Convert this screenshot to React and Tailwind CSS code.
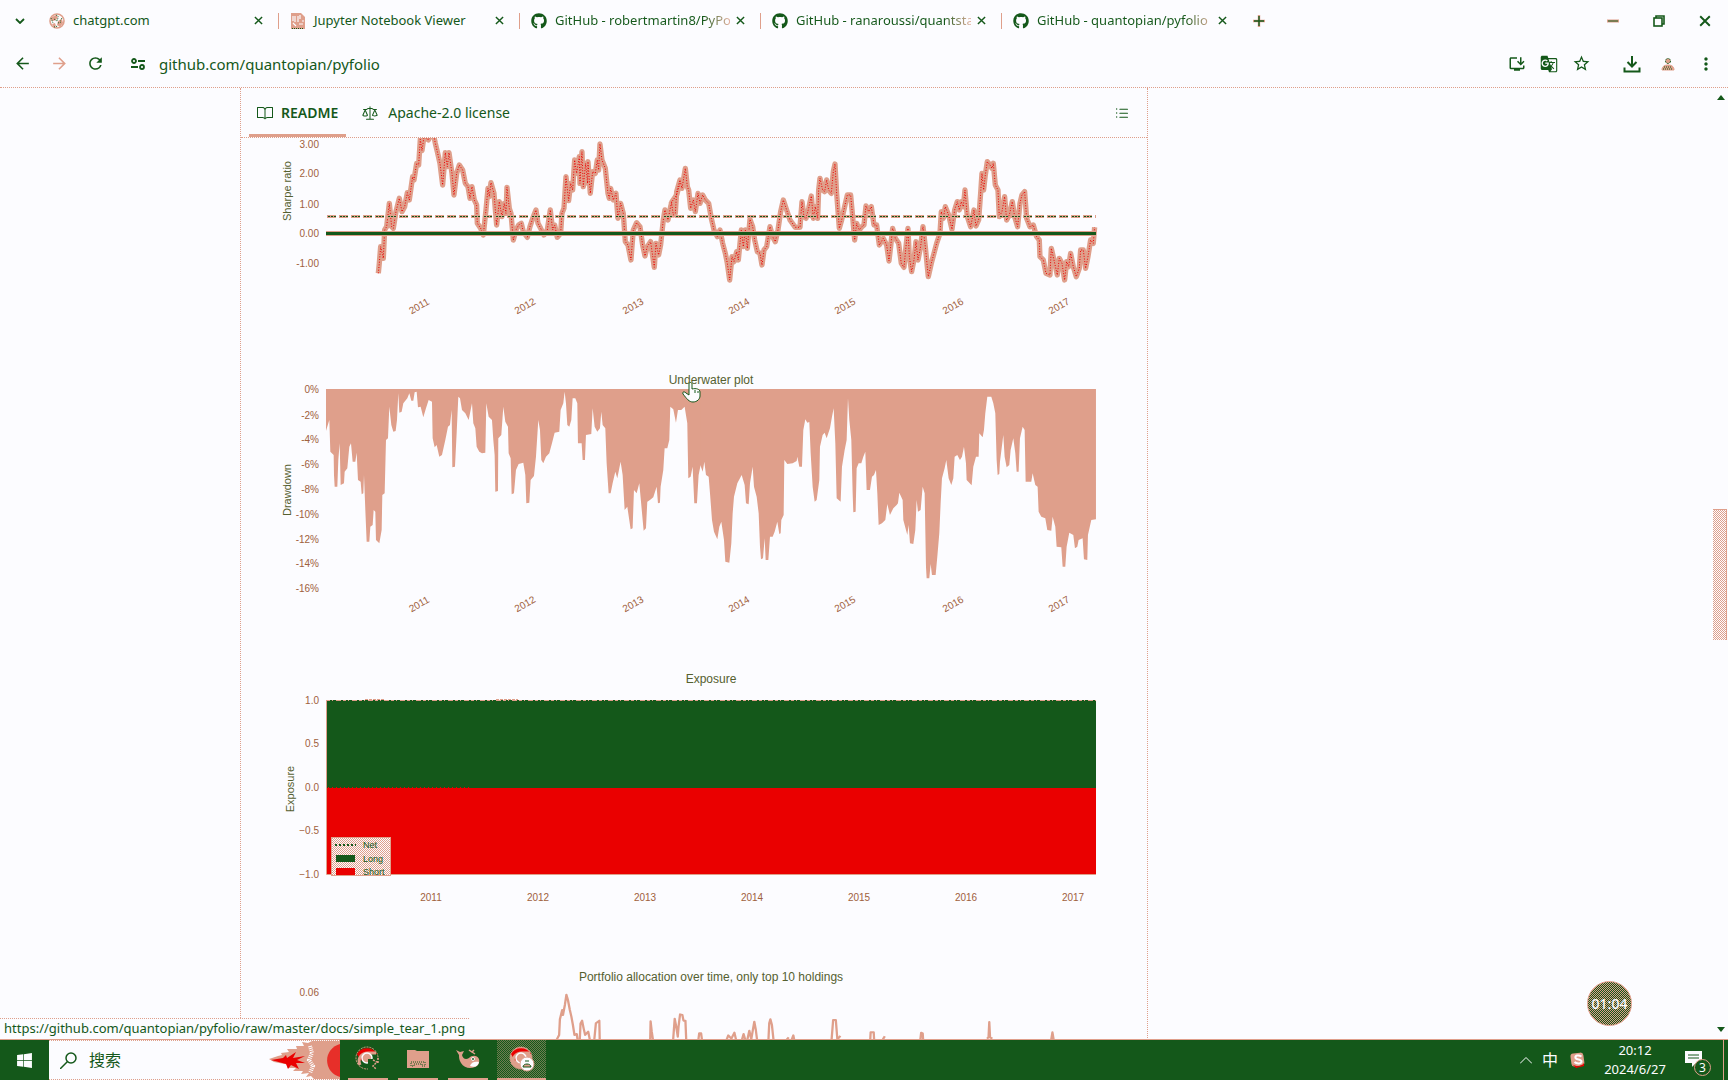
import React from "react";
import { FaGithub, FaWindows } from "react-icons/fa";
import { GoBook, GoLaw, GoListUnordered } from "react-icons/go";
import {
  MdArrowBack,
  MdArrowForward,
  MdRefresh,
  MdInstallDesktop,
  MdGTranslate,
  MdStarBorder,
  MdMoreVert,
} from "react-icons/md";

const INK = "#14581a";
const SALMON = "#df9f8b";
const RED = "#ea0000";
const PAPER = "#fcfcff";
const TICK = "#a0603c";
const TITLE = "#55602f";

const YEARS = ["2011", "2012", "2013", "2014", "2015", "2016", "2017"];

const SHARPE_A =
  "415,430 418,400 422,350 430,385 434,300 440,290 448,220 455,290 460,295 468,245 478,205 486,245 494,230 502,188 508,210 518,140 522,150 530,100 536,105 541,28 546,62 552,20 565,30 572,15 580,10 586,40 592,65 600,100 608,165 616,68 622,110 627,68 636,130 642,195 650,130 658,105 668,120 676,160 684,170 690,205 696,170 703,210 710,225 712,280 722,295 730,315 738,240 744,175 748,200 753,158 762,190 770,285 778,215 786,260 793,220 798,250 801,172 808,235 813,250 820,330 828,300 836,285 844,280 850,305 862,322 870,290 880,260 888,240 894,280 902,295 912,315 922,300 931,240 938,300 944,285 952,322 962,310 966,250 972,235 978,140 986,212 992,160 998,180 1004,90 1010,130 1018,80 1020,160 1026,65 1030,170 1037,100 1043,160 1044,95 1051,190 1058,125 1066,130 1072,90 1076,120 1080,42 1086,90 1096,115 1104,190 1108,205 1112,175 1120,210 1128,190 1134,265 1142,220 1150,250 1156,335 1164,345 1173,390 1180,300 1190,278 1200,290 1208,345 1215,378 1222,350 1232,335 1243,412 1248,340 1256,375 1262,345 1270,270 1275,240 1284,270 1292,230 1296,215 1310,195 1320,160";
const SHARPE_B =
  "4,215 10,255 16,250 20,185 30,150 36,175 46,115 52,170 56,180 62,235 70,210 76,245 84,190 90,220 98,195 106,210 116,220 124,265 132,300 142,320 150,300 158,340 166,370 172,400 179,450 186,380 192,395 200,365 205,390 214,300 220,350 226,300 232,355 240,268 248,290 254,330 262,365 270,370 276,405 282,360 290,350 300,290 308,320 316,335 324,300 332,245 340,210 350,240 360,270 376,292 390,292 396,215 402,260 408,265 416,235 424,198 430,265 436,230 443,265 446,180 450,145 458,180 464,185 470,150 476,180 484,190 490,125 495,102 500,190 508,295 515,270 524,230 532,195 542,195 548,260 554,330 560,280 568,300 576,290 582,285 588,228 596,245 604,230 612,285 620,285 628,345 640,325 650,345 657,393 662,350 668,295 676,325 686,340 694,400 702,412 708,350 714,295 718,380 725,425 732,390 738,335 744,390 752,350 759,290 766,350 775,440 784,400 792,370 800,340 810,310 814,245 820,265 826,230 836,255 846,298 854,240 862,215 868,240 874,215 880,230 885,180 892,260 902,290 912,240 918,288 926,270 932,190 936,130 941,180 946,135 952,95 960,105 966,115 970,100 976,165 984,180 988,260 996,245 1004,200 1010,270 1018,255 1027,215 1034,260 1043,290 1050,220 1056,195 1064,185 1070,265 1080,290 1090,285 1100,320 1108,330 1110,380 1120,390 1128,430 1140,435 1144,355 1152,390 1162,435 1168,385 1176,400 1184,450 1190,395 1196,410 1202,370 1210,410 1219,440 1228,415 1232,360 1240,360 1247,415 1254,380 1262,330 1270,340 1274,292";

const DRAWDOWN_A =
  "168,87 168,213 178,180 181,275 191,285 192,345 194,380 202,380 205,300 209,250 212,375 222,370 224,335 232,325 238,260 243,250 248,305 256,305 260,278 264,360 272,365 275,403 280,400 282,345 286,450 290,545 298,545 301,500 308,495 311,450 316,455 318,540 328,550 335,510 337,405 344,400 348,240 354,235 358,140 364,195 370,215 377,213 381,180 385,100 388,158 395,155 400,130 412,115 418,100 424,122 430,122 434,97 440,95 444,142 452,140 460,172 468,145 476,120 486,125 488,235 494,262 500,255 508,290 516,285 526,240 534,200 540,195 545,150 547,322 555,320 560,220 565,110 570,115 576,150 586,160 596,180 602,150 606,130 610,190 616,205 620,260 628,275 636,280 646,278 649,130 656,170 666,180 670,240 674,285 676,395 684,393 685,235 694,225 700,140 706,185 714,200 716,280 722,295 725,403 732,400 738,330 746,312 760,308 766,345 769,430 778,428 782,360 792,348 798,290 805,180 810,210 814,300 820,310 828,290 838,280 846,250 854,218 868,215 872,150 880,130 884,95 888,130 892,195 898,200 904,180 908,115 916,115 922,130 924,250 935,250 938,300 945,300 948,225 964,222 968,145 974,200 982,215 990,205 994,155 998,195 1006,205 1010,310 1016,400 1022,400 1028,370 1036,335 1042,355 1048,325 1052,305 1058,345 1064,450 1072,440 1082,508 1088,505 1092,390 1100,400 1108,370 1114,435 1121,512 1128,505 1132,425 1140,420 1150,412 1160,380 1164,430 1170,428 1172,380 1180,330 1184,265 1192,265 1198,240 1201,140 1210,148 1218,188 1224,150 1234,150 1244,140 1252,190 1255,355 1262,350 1268,320 1273,430 1281,430 1286,345 1292,315 1297,325 1297,87";
const DRAWDOWN_B =
  "91,87 91,315 98,335 103,305 108,345 116,350 120,400 126,480 132,515 142,538 148,500 154,485 162,540 166,605 178,608 184,550 188,460 192,410 202,370 215,345 224,375 228,430 236,433 240,370 248,320 252,380 260,410 266,460 270,560 273,598 279,595 284,535 287,600 295,600 300,530 308,530 314,515 322,485 328,522 332,520 334,480 341,465 343,300 352,312 368,310 380,303 382,290 388,320 396,320 400,210 406,178 412,188 418,186 422,280 428,380 434,425 440,420 448,360 450,260 458,225 464,218 470,235 480,205 486,170 491,145 496,250 500,415 512,425 516,320 524,270 530,240 534,115 538,180 544,240 548,400 550,457 557,455 560,325 566,310 574,310 580,290 586,275 590,390 600,390 606,350 612,345 618,330 622,400 626,495 636,490 646,480 652,432 660,465 670,445 680,435 684,430 688,398 698,420 700,480 712,525 716,495 720,550 730,552 736,510 740,420 744,455 752,450 758,380 764,400 768,620 770,655 778,655 782,612 786,645 797,645 802,590 808,520 812,430 816,355 824,325 829,300 836,355 844,375 850,355 854,290 862,285 870,300 876,290 882,260 888,310 890,360 905,376 910,320 918,290 926,290 928,220 938,232 942,210 946,160 952,110 964,110 970,130 976,160 980,300 983,345 988,342 990,305 1000,225 1004,290 1010,322 1018,315 1022,270 1030,235 1036,280 1040,335 1046,335 1050,235 1058,200 1064,210 1067,365 1084,365 1088,340 1096,375 1103,380 1106,455 1114,470 1126,475 1132,510 1144,512 1148,470 1156,500 1160,560 1174,562 1178,620 1186,620 1190,560 1198,518 1210,525 1215,565 1222,560 1226,540 1238,535 1242,598 1252,600 1254,525 1264,480 1278,478 1278,87";

const ALLOCATION =
  "M44,238L50,225L52,178L58,150L60,165L65,135L69,104L73,120L78,150L82,170L86,195L90,225L96,222L98,238 M104,238L106,190L110,182L114,205L118,225L126,215L130,238 M142,238L146,190L155,182L156,238 M288,238L289,184L292,215L295,238 M348,238L352,176L356,200L360,230L362,200L366,163L372,165L375,182L380,182L382,238 M414,238L416,220L421,220L423,238 M488,238L492,226L500,236L508,218L512,238 M528,238L532,222L536,238 M542,238L547,212L552,238L560,185L564,210L567,238 M597,238L599,190L602,178L606,195L610,238 M645,238L650,232 M658,238L662,226L664,238 M762,238L766,180L773,180L777,238L785,228 M863,238L864,217L872,217L873,238 M896,238L901,229 M994,238L996,218L1000,220L1001,238 M1168,236L1172,232L1174,186L1176,232L1182,236 M1336,238L1339,217L1342,238";

const tabs = [
  { title: "chatgpt.com", icon: "globe" },
  { title: "Jupyter Notebook Viewer", icon: "notebook" },
  { title: "GitHub - robertmartin8/PyPo", icon: "github" },
  { title: "GitHub - ranaroussi/quantsta", icon: "github" },
  { title: "GitHub - quantopian/pyfolio", icon: "github" },
];

function Globe() {
  return (
    <svg viewBox="0 0 16 16" className="size-4 shrink-0" aria-hidden="true">
      <circle cx="8" cy="8" r="7" fill={PAPER} stroke={SALMON} strokeWidth="1.6" />
      <path d="M3 4l4-2 2 2-2 3-3 1-2-1zM9 8l4-2 1 4-3 4-3-2zM3 11l3-1 1 3-2 1z" fill={SALMON} />
      <path d="M5 6l3 2 1-3M9 10l3-1M7 2l3 2M2 5l2 5M13 5l-2 3M5 14l4-1" stroke={INK} fill="none" strokeDasharray="1 1" />
    </svg>
  );
}

function Notebook() {
  return (
    <svg viewBox="0 0 16 16" className="size-4 shrink-0" aria-hidden="true">
      <path d="M1 0h10l4 4v12H1z" fill={SALMON} />
      <path d="M3 8V3M5 9V3M8 9V3M10 6V2M3 10l3 3M9 11h4M12 8h2" stroke={PAPER} strokeWidth="1.2" />
      <path d="M2 15.5h12" stroke={INK} strokeDasharray="1 1" />
    </svg>
  );
}

function Cross({ className }) {
  return (
    <svg viewBox="0 0 10 10" className={className} aria-hidden="true">
      <path d="M1 1l8 8M9 1l-8 8" stroke={INK} strokeWidth="1.6" fill="none" />
    </svg>
  );
}

function Tab({ tab, last, active }) {
  return (
    <div className="flex h-full min-w-0 max-w-[241px] flex-1 items-center pl-[9px]">
      {tab.icon === "globe" && <Globe />}
      {tab.icon === "notebook" && <Notebook />}
      {tab.icon === "github" && <FaGithub className="size-4 shrink-0" />}
      <button
        type="button"
        role="tab"
        aria-selected={active}
        className={
          tab.icon === "github"
            ? "ml-2 min-w-0 flex-1 bg-linear-to-r from-[#14581a] from-85% to-[#e6b3a3] bg-clip-text text-left text-[13px] whitespace-nowrap text-transparent"
            : "ml-2 min-w-0 flex-1 text-left text-[13px] whitespace-nowrap"
        }
      >
        {tab.title}
      </button>
      <button type="button" aria-label="Close tab" className="flex w-5 justify-center">
        <Cross className="size-[9px]" />
      </button>
      <span className={last ? "ml-[10px] w-px" : "ml-[10px] h-4 w-px bg-[#df9f8b]"} />
      <span className="w-[2px]" />
    </div>
  );
}

function TabStrip() {
  return (
    <div className="flex h-10 items-center pt-px">
      <button type="button" aria-label="Search tabs" className="flex w-10 justify-center">
        <svg viewBox="0 0 10 6" className="h-[6px] w-[10px]">
          <path d="M1 1l4 4 4-4" stroke={INK} strokeWidth="1.8" fill="none" />
        </svg>
      </button>
      <div role="tablist" className="flex h-full min-w-0 flex-1">
        {tabs.map((t, i) => (
          <Tab key={t.title} tab={t} active={i === 4} last={i === 4} />
        ))}
        <button type="button" aria-label="New tab" className="flex w-7 items-center justify-center">
          <svg viewBox="0 0 12 12" className="size-3">
            <path d="M6 0v12M0 6h12" stroke={SALMON} strokeWidth="2.4" />
            <path d="M6 1v10M1 6h10" stroke={INK} strokeWidth="1.4" />
          </svg>
        </button>
      </div>
      <div className="flex">
        <button type="button" aria-label="Minimize" className="flex w-[46px] items-center justify-center">
          <svg viewBox="0 0 12 12" className="size-3">
            <path d="M0 6h12" stroke={SALMON} strokeWidth="3" />
            <path d="M1 6h10" stroke={INK} strokeWidth="1" />
          </svg>
        </button>
        <button type="button" aria-label="Restore" className="flex w-[46px] items-center justify-center">
          <svg viewBox="0 0 12 12" className="size-3">
            <path d="M3 3V1h8v8H9" stroke={INK} strokeWidth="1.6" fill="none" />
            <rect x="1" y="3" width="8" height="8" stroke={INK} strokeWidth="1.6" fill={PAPER} />
          </svg>
        </button>
        <button type="button" aria-label="Close" className="flex w-[46px] items-center justify-center">
          <Cross className="size-3" />
        </button>
      </div>
    </div>
  );
}

function Toolbar() {
  return (
    <div className="flex h-12 items-center border-b border-dotted border-[#df9f8b]">
      <div className="flex items-center pl-[13px]">
        <button type="button" aria-label="Back" className="mr-[18px]">
          <MdArrowBack className="size-[19px]" />
        </button>
        <button type="button" aria-label="Forward" className="mr-[17px] text-[#df9f8b]">
          <MdArrowForward className="size-[19px]" />
        </button>
        <button type="button" aria-label="Reload" className="mr-[26px]">
          <MdRefresh className="size-[19px]" />
        </button>
        <button type="button" aria-label="Site information">
          <svg viewBox="0 0 14 12" className="h-3 w-[14px]" fill="none" stroke={INK} strokeWidth="1.8">
            <circle cx="3" cy="3" r="2" />
            <path d="M7 3h7M0 9h7" />
            <circle cx="11" cy="9" r="2" />
          </svg>
        </button>
      </div>
      <input
        aria-label="Address"
        className="ml-[14px] h-6 min-w-0 flex-1 bg-transparent text-[15px] outline-none"
        defaultValue="github.com/quantopian/pyfolio"
      />
      <div className="flex items-center pr-3">
        <button type="button" aria-label="Install" className="mr-[14px]">
          <MdInstallDesktop className="size-[18px]" />
        </button>
        <button type="button" aria-label="Translate" className="mr-[14px]">
          <MdGTranslate className="size-[18px]" />
        </button>
        <button type="button" aria-label="Bookmark" className="mr-8">
          <MdStarBorder className="size-[19px]" />
        </button>
        <button type="button" aria-label="Downloads" className="mr-5">
          <svg viewBox="0 0 18 18" className="size-[18px]" fill="none" stroke={INK} strokeWidth="2">
            <path d="M9 1v10M4.500 7L9 11.500 13.500 7M1.500 12.500v4h15v-4" />
          </svg>
        </button>
        <button type="button" aria-label="Profile" className="mr-[21px]">
          <svg viewBox="0 0 14 14" className="size-[14px]">
            <circle cx="7" cy="4" r="2.500" fill={SALMON} stroke={INK} strokeDasharray="2 1" />
            <path d="M1 13c0-4 3-5 6-5s6 1 6 5z" fill={SALMON} stroke={SALMON} />
            <path d="M2 12h10M3 10h8" stroke={INK} strokeDasharray="1 1" />
          </svg>
        </button>
        <button type="button" aria-label="Menu">
          <MdMoreVert className="size-5" />
        </button>
      </div>
    </div>
  );
}

function RotatedYears({ y }) {
  const xs = [419, 525, 633, 739, 845, 953, 1059];
  return YEARS.map((t, i) => (
    <text key={t} x={xs[i]} y={y} textAnchor="middle" dominantBaseline="central" fill={TICK} fontSize="10" transform={`rotate(-30 ${xs[i]} ${y})`}>
      {t}
    </text>
  ));
}

function YTicks({ items }) {
  return items.map(([label, y]) => (
    <text key={label} x="319" y={y} textAnchor="end" dominantBaseline="central" fill={TICK} fontSize="10">
      {label}
    </text>
  ));
}

function AxisLabel({ x, y, children }) {
  return (
    <text x={x} y={y} textAnchor="middle" dominantBaseline="central" fill={TITLE} fontSize="11" transform={`rotate(-90 ${x} ${y})`}>
      {children}
    </text>
  );
}

function Title({ y, children }) {
  return (
    <text x="711" y={y} textAnchor="middle" dominantBaseline="central" fill={TITLE} fontSize="12">
      {children}
    </text>
  );
}

const chartClass = "block h-auto w-full font-['Liberation_Sans',sans-serif]";

function SharpeLine({ stroke, width, dash }) {
  return (
    <g fill="none" stroke={stroke} strokeWidth={width} strokeDasharray={dash} strokeLinejoin="round">
      <polyline points={SHARPE_A} transform="translate(240 130) scale(.3333)" />
      <polyline points={SHARPE_B} transform="translate(670 130) scale(.3333)" />
    </g>
  );
}

function SharpeChart() {
  return (
    <svg viewBox="241 138 906 222" className={chartClass} role="img" aria-label="Rolling Sharpe ratio">
      <SharpeLine stroke={SALMON} width="16" />
      <SharpeLine stroke={RED} width="3" dash="3 5" />
      <path d="M327 216.500h769" stroke={SALMON} strokeWidth="3" strokeDasharray="9 3" />
      <path d="M328 216.500h768" stroke={INK} strokeWidth="1" strokeDasharray="2 1 2 1 2 4" />
      <path d="M326 233.500h770" stroke={SALMON} strokeWidth="5" />
      <path d="M326 233.500h770" stroke={INK} strokeWidth="3" />
      <YTicks items={[["3.00", 144], ["2.00", 173], ["1.00", 204], ["0.00", 233], ["-1.00", 263]]} />
      <AxisLabel x={287} y={191}>Sharpe ratio</AxisLabel>
      <RotatedYears y={306} />
    </svg>
  );
}

function UnderwaterChart() {
  return (
    <svg viewBox="241 360 906 300" className={chartClass} role="img" aria-label="Underwater plot">
      <Title y={380}>Underwater plot</Title>
      <polygon points={DRAWDOWN_A} transform="translate(270 360) scale(.3333)" fill={SALMON} />
      <polygon points={DRAWDOWN_B} transform="translate(670 360) scale(.3333)" fill={SALMON} />
      <YTicks
        items={[["0%", 389], ["-2%", 415], ["-4%", 439], ["-6%", 464], ["-8%", 489], ["-10%", 514], ["-12%", 539], ["-14%", 563], ["-16%", 588]]}
      />
      <AxisLabel x={287} y={490}>Drawdown</AxisLabel>
      <RotatedYears y={604} />
      <path
        d="M689 395V384c0-2 3-2 3 0v5c4-1 8 0 8 3v4c0 3-3 6-7 6s-6-3-10-8c-1-2 1-3 3-1z"
        fill={PAPER}
        stroke={INK}
        strokeWidth="1"
      />
      <path d="M695 390v3M698 391v2" stroke={INK} />
    </svg>
  );
}

function ExposureChart() {
  const xs = [431, 538, 645, 752, 859, 966, 1073];
  return (
    <svg viewBox="241 660 906 300" className={chartClass} role="img" aria-label="Exposure">
      <defs>
        <pattern id="weave" width="2" height="2" patternUnits="userSpaceOnUse">
          <rect width="2" height="2" fill={PAPER} />
          <path d="M0 0h1v1H0zM1 1h1v1H1z" fill={SALMON} />
        </pattern>
      </defs>
      <Title y={679}>Exposure</Title>
      <rect x="327" y="700" width="769" height="88" fill={INK} />
      <rect x="327" y="788" width="769" height="87" fill={RED} />
      <path d="M326.500 700v174.500H1096" fill="none" stroke={SALMON} />
      <path d="M327 700.500h769" stroke={SALMON} strokeDasharray="3 2 1 3 5 2" />
      <path d="M328 787.500h142" stroke={RED} strokeDasharray="1 3" />
      <path d="M365 699.500h20M496 699.500h22" stroke={SALMON} strokeDasharray="3 1" />
      <rect x="331.500" y="837.500" width="59" height="38" fill="url(#weave)" stroke={SALMON} />
      <path d="M335 845h21" stroke={INK} strokeWidth="2" strokeDasharray="2 2" />
      <rect x="336" y="855" width="19" height="7" fill={INK} />
      <rect x="336" y="868" width="19" height="7" fill={RED} />
      <g fill={INK} fontSize="9" dominantBaseline="central">
        <text x="363" y="845">Net</text>
        <text x="363" y="859">Long</text>
        <text x="363" y="872">Short</text>
      </g>
      <YTicks items={[["1.0", 700], ["0.5", 743], ["0.0", 787], ["−0.5", 830], ["−1.0", 874]]} />
      <AxisLabel x={290} y={789}>Exposure</AxisLabel>
      {YEARS.map((t, i) => (
        <text key={t} x={xs[i]} y="897" textAnchor="middle" dominantBaseline="central" fill={TICK} fontSize="10">
          {t}
        </text>
      ))}
    </svg>
  );
}

function AllocationChart() {
  return (
    <svg viewBox="241 960 906 80" className={chartClass} role="img" aria-label="Portfolio allocation">
      <Title y={977}>Portfolio allocation over time, only top 10 holdings</Title>
      <YTicks items={[["0.06", 992]]} />
      <path d={ALLOCATION} transform="translate(540 960) scale(.3827 .3333)" fill="none" stroke={SALMON} strokeWidth="6" strokeLinejoin="round" />
    </svg>
  );
}

function Readme() {
  return (
    <article className="min-w-0 flex-1 border-x border-dotted border-[#df9f8b]">
      <div className="flex h-[50px] items-stretch border-b border-dotted border-[#df9f8b] pr-[17px] pl-2 text-[14px]">
        <a href="#readme" className="flex items-center gap-2 border-b-3 border-[#df9f8b] px-2 pt-[3px] font-semibold">
          <GoBook className="size-4" />
          README
        </a>
        <a href="#license" className="ml-4 flex items-center gap-[10px]">
          <GoLaw className="size-4" />
          Apache-2.0 license
        </a>
        <button type="button" aria-label="Outline" className="ml-auto">
          <GoListUnordered className="size-4" />
        </button>
      </div>
      <SharpeChart />
      <UnderwaterChart />
      <ExposureChart />
      <AllocationChart />
    </article>
  );
}

function Scrollbar() {
  return (
    <div className="flex w-[15px] shrink-0 flex-col items-center justify-between py-[7px]">
      <svg viewBox="0 0 8 5" className="h-[5px] w-2"><path d="M0 5L4 0l4 5z" fill={INK} /></svg>
      <div className="flex w-full flex-1 flex-col">
        <div className="grow-[409]" />
        <div className="w-[14px] grow-[131] border-t border-r border-[#df9f8b] bg-[repeating-conic-gradient(#df9f8b_0_25%,#fcfcff_0_50%)] bg-[length:2px_2px]" />
        <div className="grow-[387]" />
      </div>
      <svg viewBox="0 0 8 5" className="h-[5px] w-2"><path d="M0 0h8L4 5z" fill={INK} /></svg>
    </div>
  );
}

function Fireball() {
  return (
    <svg viewBox="0 0 72 38" className="ml-auto h-[38px] w-[72px]" aria-hidden="true">
      <path d="M44 0h28v38H46l-3-3-5 1 3-4-8 1 2-3-10 0 3-3-9 0 3-3-16-3-5-3 9-3 4-1-1-2 8-1-2-3 10 0-1-3 8 0-2-4 6 1z" fill={SALMON} />
      <path d="M42 5l2 7-3 7 4 6-3 7" stroke={PAPER} strokeWidth="4" fill="none" strokeDasharray="1 1" />
      <path d="M3 19l12-2 3-3 1 3 9-6-3 6 12-2-8 4 8 3-9 0 3 6-8-4-3 4-2-5z" fill={RED} />
      <path d="M72 3a17 17 0 0 0 0 33z" fill={RED} fillOpacity=".7" />
    </svg>
  );
}

function Chrome({ active }) {
  return (
    <svg viewBox="0 0 26 26" className="size-[26px]" aria-hidden="true">
      <circle cx="12" cy="12" r="11" fill={active ? SALMON : INK} stroke={SALMON} strokeDasharray="2 1" />
      <path d="M2 8a11.500 11.500 0 0 1 20 0L13 7 8 12 6 15z" fill={RED} />
      <path d="M5 19c-3-7 2-12 8-12h8" fill="none" stroke={SALMON} strokeWidth="3" />
      <circle cx="12" cy="12" r="5" fill={SALMON} stroke={PAPER} strokeWidth="1.500" />
      {active ? (
        <>
          <circle cx="18" cy="18" r="7" fill={PAPER} stroke={SALMON} />
          <path d="M14 21c0-4 8-4 8 0zM16 15h4" fill={SALMON} stroke={INK} />
        </>
      ) : (
        <>
          <path d="M13 13h13v13H13z" fill={INK} />
          <path d="M18 14l4 2-4 4 3 3M23 12v6" stroke={SALMON} strokeWidth="1.500" fill="none" strokeDasharray="2 1" />
        </>
      )}
    </svg>
  );
}

function Folder() {
  return (
    <svg viewBox="0 0 22 18" className="h-[18px] w-[22px]" aria-hidden="true">
      <path d="M0 0h8l2 1h12v17H0z" fill={SALMON} />
      <path d="M4 16v-4h14v4h-3v-2H7v2z" fill="none" stroke={INK} strokeDasharray="1 1" />
    </svg>
  );
}

function Whale() {
  return (
    <svg viewBox="0 0 24 20" className="h-5 w-6" aria-hidden="true">
      <path d="M0 1l4 2 4-1-2 4c1 4 4 5 7 3 3-3 8-3 10 1 1 4-1 7-4 8-5 2-11 1-14-4-2-3-2-6-2-8z" fill={SALMON} />
      <path d="M13 1l3 2 2-2M16 3l3 2" stroke={SALMON} strokeWidth="1.500" fill="none" />
      <path d="M14 17c1-4 5-5 9-4-1 4-4 6-9 4z" fill={PAPER} />
      <circle cx="17" cy="10" r="1.500" fill={INK} stroke={PAPER} />
    </svg>
  );
}

function TaskButton({ label, active, children }) {
  return (
    <button
      type="button"
      aria-label={label}
      className={
        active
          ? "ml-1 flex w-[49px] items-center justify-center border-b-2 border-[#df9f8b] bg-[repeating-conic-gradient(#14581a_0_25%,#6f7c50_0_50%)] bg-[length:2px_2px]"
          : "mx-[5px] flex w-10 items-center justify-center border-b-2 border-[#df9f8b]"
      }
    >
      {children}
    </button>
  );
}

function Taskbar() {
  return (
    <footer className="flex h-[41px] shrink-0 items-stretch border-t border-[#df9f8b] bg-[#14581a] text-[#fcfcff]">
      <button type="button" aria-label="Start" className="flex w-[49px] items-center justify-center">
        <FaWindows className="size-[17px]" />
      </button>
      <label className="flex w-[291px] items-center border-y border-dotted border-[#df9f8b] bg-[#fcfcff] pl-[11px] text-[#14581a]">
        <svg viewBox="0 0 17 17" className="size-[17px] shrink-0" fill="none" stroke={INK} strokeWidth="1.500">
          <circle cx="11" cy="6" r="5" />
          <path d="M7.500 9.500L0 17" />
        </svg>
        <input
          aria-label="搜索"
          placeholder="搜索"
          className="ml-3 w-20 min-w-0 bg-transparent text-[16px] outline-none placeholder:text-[#14581a]"
        />
        <Fireball />
      </label>
      <div className="ml-[3px] flex">
        <TaskButton label="Chrome"><Chrome /></TaskButton>
        <TaskButton label="Files"><Folder /></TaskButton>
        <TaskButton label="Docker"><Whale /></TaskButton>
        <TaskButton label="Chrome, pyfolio" active><Chrome active /></TaskButton>
      </div>
      <div className="ml-auto flex items-center">
        <button type="button" aria-label="Hidden icons">
          <svg viewBox="0 0 12 7" className="h-[7px] w-3"><path d="M0 6.500l6-6 6 6" stroke={PAPER} fill="none" /></svg>
        </button>
        <button type="button" className="ml-[10px] text-[16px] leading-5">中</button>
        <button type="button" aria-label="Sogou input" className="ml-3">
          <svg viewBox="0 0 16 16" className="size-4">
            <rect x="1" y="1" width="13" height="13" rx="3" fill={SALMON} transform="rotate(-8 8 8)" />
            <path d="M2 12c4 3 9 3 12-1v3l-8 2z" fill={RED} />
            <path d="M11.500 4.500c-3-2-7-1-6 1.500 1 2 6 1 6 3.500s-5 2.500-7 .5" fill="none" stroke={PAPER} strokeWidth="2" />
          </svg>
        </button>
        <div className="ml-4 w-[66px] text-center text-[13px] leading-[19px] whitespace-nowrap">
          <div>20:12</div>
          <div>2024/6/27</div>
        </div>
        <button type="button" aria-label="Notifications, 3 new" className="relative ml-[17px] mr-[10px] flex h-8 w-7">
          <svg viewBox="0 0 18 16" className="mt-[7px] h-4 w-[18px]">
            <path d="M0 0h17v12h-6l-4 4v-4H0z" fill={PAPER} />
            <path d="M3 4h11M3 7h11" stroke={INK} />
          </svg>
          <span className="absolute right-[2px] bottom-0 flex size-[17px] items-center justify-center rounded-full border border-[#df9f8b] bg-[#14581a] text-[12px]">
            3
          </span>
        </button>
        <span className="mr-1 h-10 w-px bg-[#df9f8b]" />
      </div>
    </footer>
  );
}

export default function App() {
  return (
    <div className="flex h-screen flex-col overflow-hidden bg-[#fcfcff] font-['Noto_Sans','Noto_Sans_CJK_SC',sans-serif] text-[#14581a]">
      <header className="shrink-0">
        <TabStrip />
        <Toolbar />
      </header>
      <main className="relative flex min-h-0 flex-1 overflow-hidden">
        <div className="flex min-w-0 flex-1 items-start pr-[565px] pl-60">
          <Readme />
        </div>
        <Scrollbar />
        <div className="absolute right-24 bottom-[13px] flex size-[45px] items-center justify-center rounded-full border border-[#df9f8b] bg-[repeating-conic-gradient(#14581a_0_25%,#df9f8b_0_50%)] bg-[length:2px_2px] text-[14px] font-medium text-[#fcfcff]">
          01:04
        </div>
        <div className="absolute bottom-0 left-0 flex h-[21px] items-center border-t border-dotted border-[#df9f8b] bg-[#fcfcff] px-1 text-[13px] whitespace-nowrap">
          https://github.com/quantopian/pyfolio/raw/master/docs/simple_tear_1.png
        </div>
      </main>
      <Taskbar />
    </div>
  );
}
